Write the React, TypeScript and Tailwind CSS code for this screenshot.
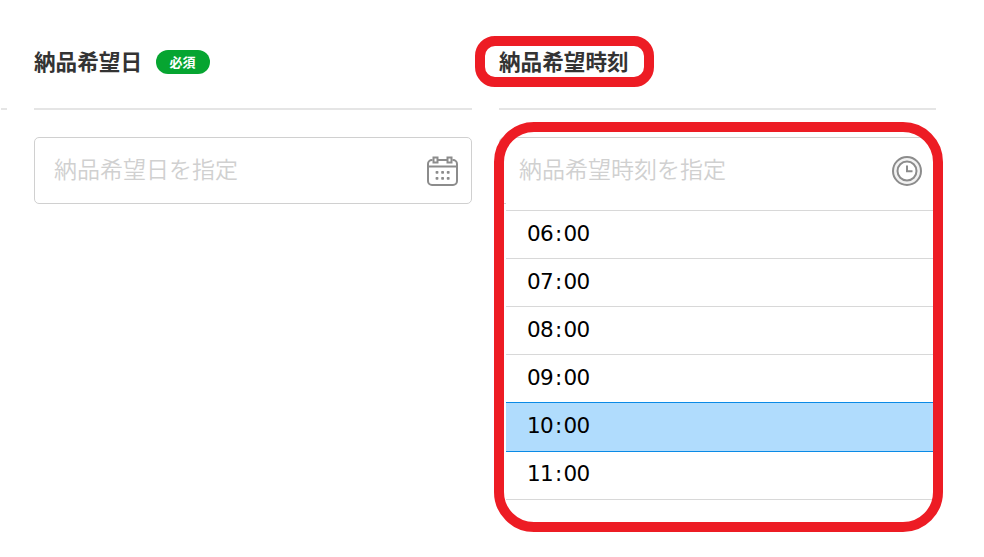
import { useState } from 'react';

const HOURS = ['06', '07', '08', '09', '10', '11'];

function CalendarIcon() {
  return (
    <svg width="32" height="31" viewBox="0 0 32 31" fill="none" stroke="#8c8c8c" strokeWidth="2">
      <path d="M5.500 4H5a4 4 0 0 0-4 4V25a4 4 0 0 0 4 4h21a4 4 0 0 0 4-4V8a4 4 0 0 0-4-4h-.5M11 4h9M1 10.500h29" />
      <rect x="6.500" y="1.500" width="4" height="5" />
      <rect x="20.500" y="1.500" width="4" height="5" />
      <g fill="#8c8c8c" stroke="none">
        {[8.600, 14.200, 19.800].map((x) => (
          <g key={x}>
            <rect x={x} y="15" width="2.800" height="2.800" rx=".7" />
            <rect x={x} y="21" width="2.800" height="2.800" rx=".7" />
          </g>
        ))}
      </g>
    </svg>
  );
}

function ClockIcon() {
  return (
    <svg width="30" height="30" viewBox="0 0 30 30" fill="none" stroke="#8c8c8c" strokeWidth="2">
      <circle cx="15" cy="15" r="14" fill="#f2f2f2" />
      <circle cx="15" cy="15" r="9.500" fill="#fff" />
      <path d="M15 9.500V15.200h5.500" />
    </svg>
  );
}

export default function App() {
  const [selected, setSelected] = useState('10');

  return (
    <main className="relative flex h-[557px] w-[984px] overflow-hidden bg-white font-['Noto_Sans_CJK_JP',sans-serif]">
      {/* End of the column to the left */}
      <div className="mt-[108px] mr-[27px] ml-px h-0.5 w-1.5 bg-[#e5e5e5]" />

      {/* Delivery date */}
      <section className="mr-[27px] w-[438px]">
        <div className="flex h-[110px] items-start border-b-2 border-[#e5e5e5] pt-[45px]">
          <h2 className="w-[122px] text-[21.6px] leading-[32px] font-bold whitespace-nowrap text-[#333]">納品希望日</h2>
          <span className="mt-[5px] flex h-6 w-[54px] items-center justify-center rounded-full bg-[#06a531] pr-px text-[13px] leading-6 font-bold text-white">
            必須
          </span>
        </div>
        <div className="mt-[27px] flex h-[67px] items-center justify-between rounded-[5px] border border-[#d0d0d0] pr-3 pl-[19px]">
          <span className="-mt-1.5 text-[23px] leading-8 font-[350] text-[#d0d0d0]">納品希望日を指定</span>
          <span className="mt-0.5">
            <CalendarIcon />
          </span>
        </div>
      </section>

      {/* Delivery time */}
      <section className="relative w-[437px]">
        <div className="h-[110px] border-b-2 border-[#e5e5e5] pt-[45px]">
          <h2 className="text-[21.6px] leading-[32px] font-bold text-[#333]">納品希望時刻</h2>
        </div>
        <div className="mt-[27px] flex h-[67px] items-center justify-between rounded-[5px] border border-[#d0d0d0] pr-[13px] pl-[19px]">
          <span className="-mt-1.5 text-[23px] leading-8 font-[350] text-[#d0d0d0]">納品希望時刻を指定</span>
          <ClockIcon />
        </div>

        {/* Time list, open over the field's lower edge */}
        <ul className="absolute top-[202px] left-[7px] w-[427px] bg-white pt-2 font-['DejaVu_Sans',sans-serif] text-[21.5px] leading-[46px] text-black">
          {HOURS.map((hour) => (
            <li
              key={hour}
              onClick={() => setSelected(hour)}
              className={
                hour === selected
                  ? 'relative -mb-0.5 flex h-[50px] items-start border-y border-[#0a8ae6] bg-[#b0dcfd] pl-[21px]'
                  : 'flex h-12 items-start border-t border-[#d8d8d8] pl-[21px]'
              }
            >
              <span className="w-[26.500px] tracking-[-0.6px]">{hour}</span>
              <span className="w-2.5 text-center">:</span>
              <span className="tracking-[-0.6px]">00</span>
            </li>
          ))}
          <li className="mt-px h-px bg-[#d8d8d8]" />
        </ul>
      </section>

      {/* Red callout frames */}
      <div className="pointer-events-none absolute top-9 left-[475px] h-[51px] w-[179px] rounded-[20px] border-10 border-[#ed1c24]" />
      <div className="pointer-events-none absolute top-[122px] left-[494px] h-[410px] w-[449px] rounded-[40px] border-10 border-[#ed1c24]" />
    </main>
  );
}
